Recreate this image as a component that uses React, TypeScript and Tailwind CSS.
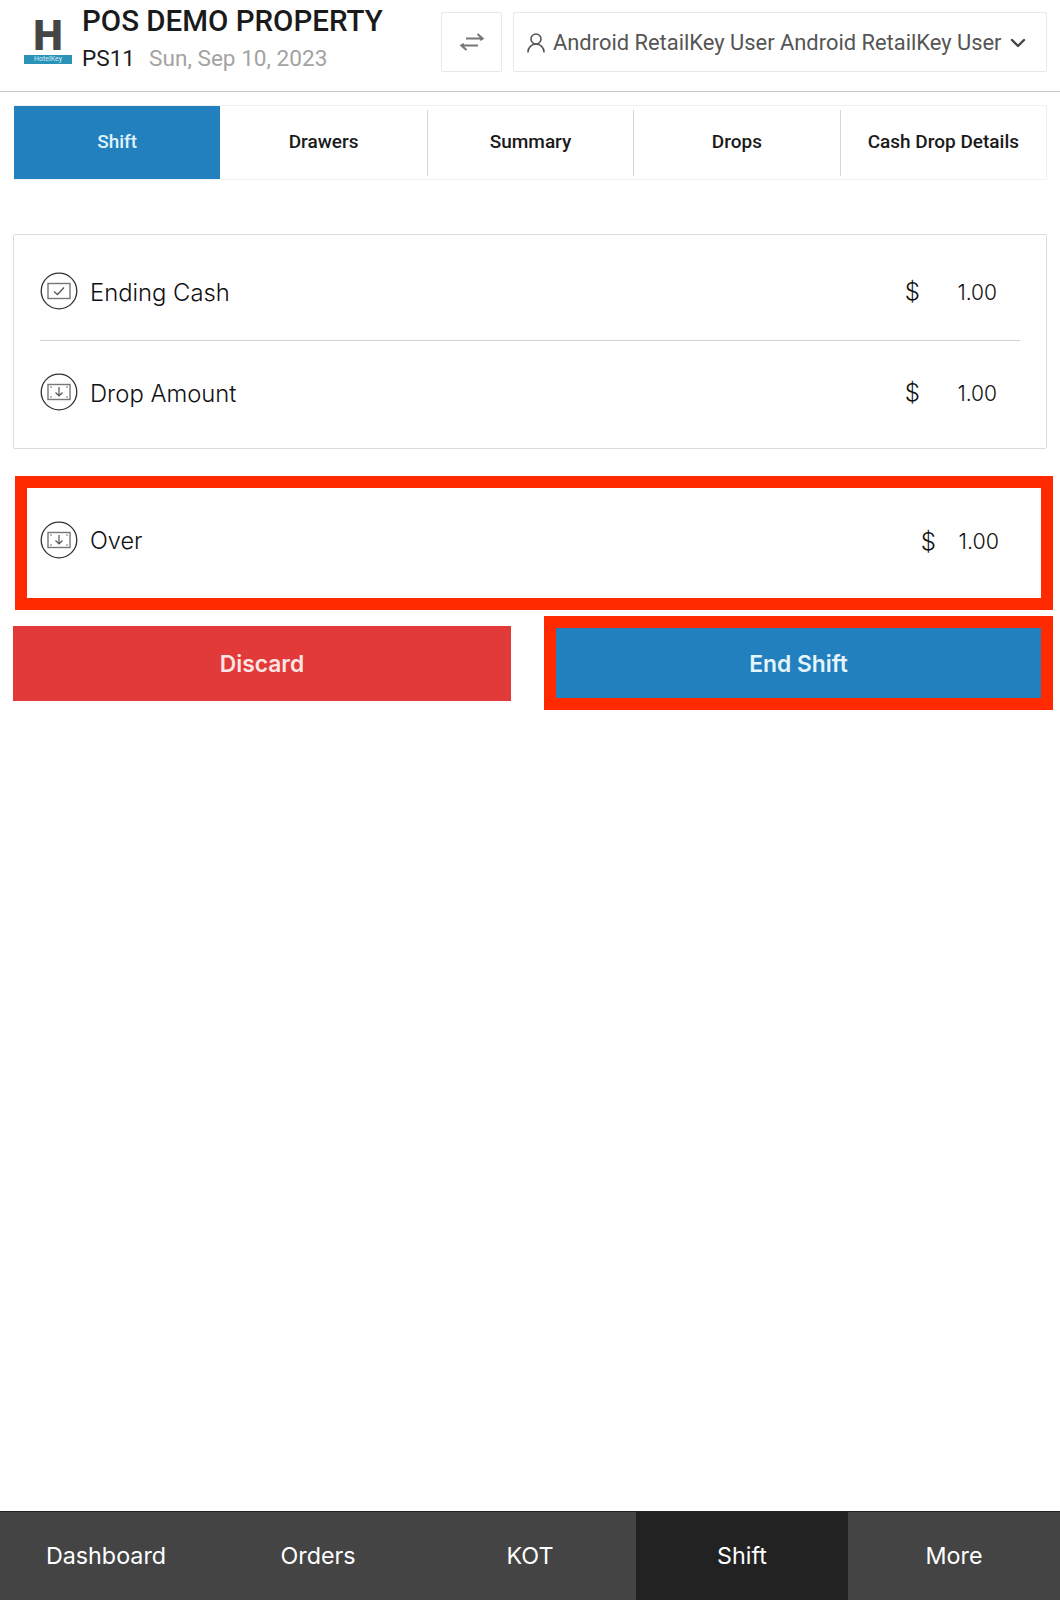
import React from 'react';
import { ChevronDown, UserRound } from 'lucide-react';

const tabs = ['Shift', 'Drawers', 'Summary', 'Drops', 'Cash Drop Details'];
const navItems = ['Dashboard', 'Orders', 'KOT', 'Shift', 'More'];

const CashIcon: React.FC<{ type: 'check' | 'down' }> = ({ type }) => (
    <svg width="38" height="38" viewBox="0 0 38 38" fill="none" className="shrink-0 mt-[1px]">
        <circle cx="19" cy="19" r="17.8" stroke="#333" strokeWidth="1.3" />
        <rect x="8" y="11.5" width="22" height="15" stroke="#777" strokeWidth="1.4" />
        {type === 'check' ? (
            <path d="M14 19.5 L17.5 22.5 L24 15.5" stroke="#555" strokeWidth="1.3" />
        ) : (
            <>
                <path d="M19 14 V22.5 M15.5 19.5 L19 23 L22.5 19.5" stroke="#555" strokeWidth="1.2" />
                <path d="M10 14 H12 M26 14 H28 M10 24 H12 M26 24 H28" stroke="#777" strokeWidth="1" />
            </>
        )}
    </svg>
);

const AmountRow: React.FC<{ label: string; icon: 'check' | 'down' }> = ({ label, icon }) => (
    <div className="flex items-center h-[100px]">
        <CashIcon type={icon} />
        <span className="ml-3 text-[23.8px] font-light text-[#111] mt-[5px]">{label}</span>
        <span className="ml-auto text-[24px] font-light text-[#111] mt-[4px]">$</span>
        <span className="w-[100px] pr-[23px] text-right text-[21px] font-light text-[#111] mt-[6px]">1.00</span>
    </div>
);

export default function App() {
    return (
        <div className="flex flex-col h-[1600px] bg-white font-['Inter',sans-serif]">
            {/* Header */}
            <div className="flex items-center h-[92px] shrink-0 pl-6 pr-[13px] border-b border-[#c9c9c9] font-['Roboto',sans-serif]">
                <div className="flex flex-col items-center w-[48px] shrink-0 mb-[7px]">
                    <span className="text-[42px] leading-[32px] font-black text-[#454545]">H</span>
                    <span className="w-full h-[9px] mt-[3px] bg-[#2b93b8] text-[#d5eef5] text-[7px] leading-[9px] text-center">HotelKey</span>
                </div>
                <div className="ml-[10px] flex flex-col mb-[9px]">
                    <span className="text-[29.5px] leading-[40px] font-medium text-[#1a1a1a] -mt-[6px]">POS DEMO PROPERTY</span>
                    <div className="flex items-center gap-[14px] text-[22.6px] leading-[32px] mt-[2px]">
                        <span className="text-[#1a1a1a]">PS11</span>
                        <span className="text-[#a3a3a3]">Sun, Sep 10, 2023</span>
                    </div>
                </div>
                <button className="ml-auto flex items-center justify-center w-[61px] h-[60px] border border-[#e8e8e8] rounded-[2px] mb-[8px]">
                    <svg width="26" height="20" viewBox="0 0 26 20" fill="none" stroke="#777" strokeWidth="2.2">
                        <path d="M7 6.5 H23 M18.5 2 L23.5 6.5 L21 8" />
                        <path d="M19 13.5 H3 M7.5 18 L2.5 13.5 L5 12" />
                    </svg>
                </button>
                <button className="ml-[11px] flex items-center w-[534px] h-[60px] pl-[10px] pt-[3px] border border-[#e8e8e8] rounded-[2px] text-[21.9px] text-[#555] mb-[8px]">
                    <UserRound size={24} className="text-[#555] shrink-0" strokeWidth={1.6} />
                    <span className="ml-[5px] whitespace-nowrap">Android RetailKey User Android RetailKey User</span>
                    <ChevronDown size={24} className="ml-[4px] text-[#444] shrink-0" strokeWidth={2.4} />
                </button>
            </div>

            {/* Tabs */}
            <div className="flex h-[75px] mt-[13px] ml-[14px] mr-[13px] shrink-0 border border-l-0 border-[#f0f0f0] font-['Roboto',sans-serif] text-[19px] font-medium text-[#1a1a1a]">
                {tabs.map((tab, i) => (
                    <div key={tab} className={`flex-1 flex items-center justify-center ${i === 0 ? 'bg-[#2280bf] text-[#dff3fb]' : ''}`}>
                        {i > 1 && <span className="w-px h-[66px] bg-[#d6d6d6] mr-auto" />}
                        <span className={i > 1 ? 'mr-auto' : ''}>{tab}</span>
                    </div>
                ))}
            </div>

            {/* Totals */}
            <div className="mt-[54px] mx-[13px] px-[26px] pt-[5px] h-[215px] shrink-0 border border-[#dcdcdc] rounded-[2px]">
                <div className="border-b border-[#d4d4d4]">
                    <AmountRow label="Ending Cash" icon="check" />
                </div>
                <AmountRow label="Drop Amount" icon="down" />
            </div>

            {/* Over */}
            <div className="flex items-center mt-[27px] ml-[15px] mr-[7px] pl-[13px] pb-[8px] h-[134px] shrink-0 border-[12px] border-[#ff2a00]">
                <CashIcon type="down" />
                <span className="ml-3 text-[23.5px] font-light text-[#111] mt-[4px]">Over</span>
                <span className="ml-auto text-[24px] font-light text-[#111] mt-[5px]">$</span>
                <span className="w-[63px] pr-[42px] box-content text-right text-[21.5px] font-light text-[#111] mt-[5px]">1.00</span>
            </div>

            {/* Actions */}
            <div className="flex items-center mt-[6px] ml-[13px] mr-[7px] shrink-0">
                <button className="w-[498px] h-[75px] pt-[2px] bg-[#e23a38] text-[#fbe4e4] text-[22.8px] font-semibold">Discard</button>
                <div className="ml-auto w-[509px] h-[94px] border-[12px] border-[#ff2a00]">
                    <button className="w-full h-full pt-[2px] bg-[#2280bf] text-[#e4f5fb] text-[22.8px] font-semibold">End Shift</button>
                </div>
            </div>

            <div className="flex-1" />

            {/* Bottom nav */}
            <div className="flex h-[89px] shrink-0 bg-[#444444] border-t border-[#222] text-[23.3px] text-white">
                {navItems.map((item, i) => (
                    <div key={item} className={`flex-1 flex items-center justify-center ${i === 3 ? 'bg-[#222222]' : ''}`}>
                        {item}
                    </div>
                ))}
            </div>
        </div>
    );
}
